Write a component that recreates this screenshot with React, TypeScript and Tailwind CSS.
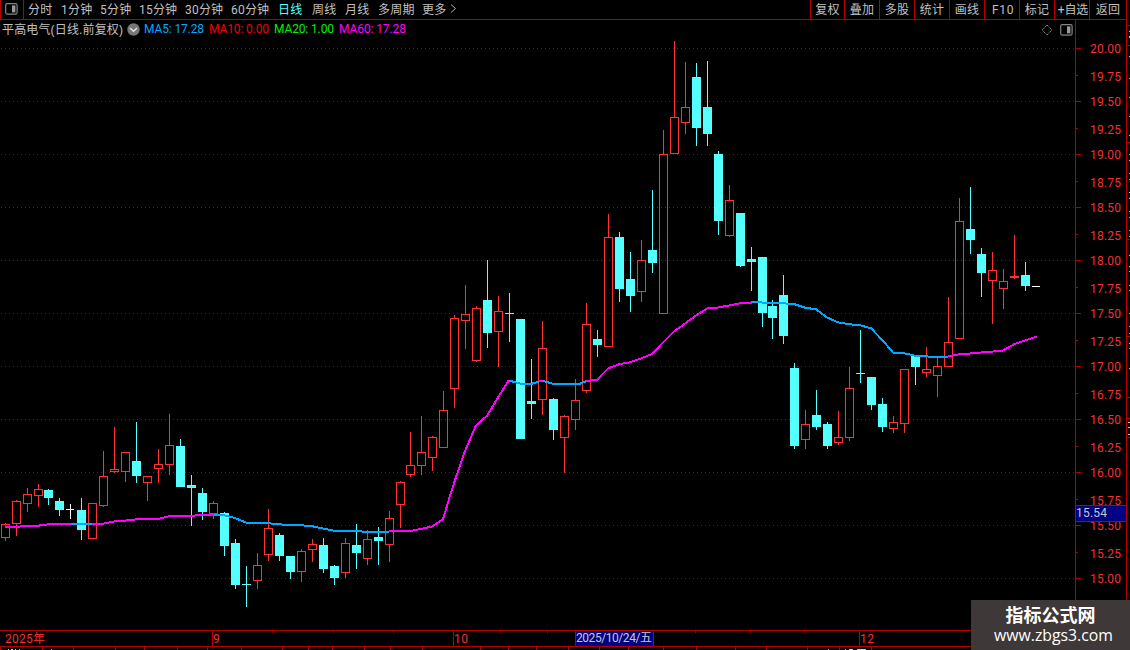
type Kind = 'r' | 'c' | 'w';
type Candle = [number, number, number, number, number, Kind];

// x centre, high, body top, body bottom, low, kind
const candles: Candle[] = [
  [5, 523, 524, 538, 541, 'r'], [16, 500, 501, 524, 536, 'r'], [27, 488, 494, 504, 512, 'r'], [38, 484, 489, 496, 507, 'r'],
  [48, 489, 490, 498, 505, 'c'], [59, 498, 501, 510, 516, 'c'], [70, 504, 509, 510, 519, 'w'], [81, 498, 510, 530, 540, 'c'],
  [92, 503, 503, 539, 539, 'r'], [103, 451, 476, 506, 507, 'r'], [114, 427, 469, 472, 473, 'r'], [125, 452, 452, 472, 482, 'r'],
  [136, 422, 461, 476, 483, 'c'], [147, 476, 476, 483, 501, 'r'], [158, 449, 464, 469, 483, 'r'], [169, 414, 445, 465, 475, 'r'],
  [180, 439, 446, 487, 487, 'c'], [191, 475, 485, 488, 526, 'c'], [202, 488, 493, 512, 520, 'c'], [213, 501, 503, 514, 519, 'r'],
  [224, 512, 513, 546, 556, 'c'], [235, 539, 543, 585, 589, 'c'], [246, 566, 584, 585, 607, 'c'], [257, 553, 565, 581, 589, 'r'],
  [268, 509, 528, 555, 561, 'r'], [279, 533, 535, 556, 561, 'c'], [290, 556, 556, 572, 579, 'c'], [301, 549, 551, 572, 582, 'r'],
  [312, 539, 544, 550, 562, 'r'], [323, 538, 545, 569, 573, 'c'], [334, 565, 566, 578, 585, 'c'], [345, 538, 543, 573, 578, 'r'],
  [356, 524, 545, 553, 569, 'c'], [367, 530, 539, 559, 565, 'r'], [378, 527, 537, 541, 565, 'c'], [389, 511, 518, 545, 562, 'r'],
  [400, 481, 482, 505, 528, 'r'], [410, 432, 465, 475, 477, 'r'], [421, 416, 452, 466, 475, 'r'], [432, 436, 437, 458, 471, 'r'],
  [443, 391, 410, 448, 448, 'r'], [454, 315, 318, 389, 408, 'r'], [465, 285, 314, 321, 349, 'r'], [476, 306, 308, 361, 362, 'r'],
  [487, 260, 300, 333, 348, 'c'], [498, 296, 311, 332, 367, 'r'], [509, 293, 313, 314, 342, 'c'], [520, 319, 319, 439, 439, 'c'],
  [531, 359, 401, 404, 419, 'c'], [542, 321, 348, 400, 415, 'r'], [553, 398, 399, 430, 440, 'c'], [564, 415, 416, 438, 473, 'r'],
  [575, 379, 400, 420, 430, 'r'], [586, 303, 324, 391, 393, 'r'], [597, 330, 339, 345, 357, 'c'], [608, 214, 237, 347, 347, 'r'],
  [619, 232, 237, 289, 302, 'c'], [630, 252, 279, 296, 312, 'c'], [641, 240, 260, 292, 302, 'r'], [652, 190, 250, 263, 273, 'c'],
  [663, 130, 154, 314, 314, 'r'], [674, 41, 117, 154, 154, 'r'], [685, 62, 107, 123, 134, 'r'], [696, 63, 77, 128, 146, 'c'],
  [707, 61, 107, 134, 146, 'c'], [718, 151, 154, 221, 235, 'c'], [729, 185, 200, 236, 237, 'r'], [740, 213, 213, 266, 267, 'c'],
  [751, 247, 259, 262, 291, 'c'], [762, 257, 257, 313, 327, 'c'], [772, 300, 306, 318, 339, 'c'], [783, 275, 295, 336, 344, 'c'],
  [794, 363, 368, 446, 449, 'c'], [805, 410, 424, 440, 449, 'r'], [816, 390, 415, 427, 430, 'c'], [827, 422, 424, 446, 449, 'c'],
  [838, 411, 437, 443, 445, 'r'], [849, 367, 388, 438, 441, 'r'], [860, 330, 373, 374, 383, 'c'], [871, 377, 377, 405, 410, 'c'],
  [882, 398, 404, 427, 432, 'c'], [893, 416, 422, 429, 433, 'r'], [904, 369, 369, 424, 433, 'r'], [915, 355, 355, 367, 385, 'c'],
  [926, 347, 369, 373, 377, 'r'], [937, 358, 366, 376, 397, 'r'], [948, 297, 342, 367, 367, 'r'], [959, 198, 221, 339, 339, 'r'],
  [970, 187, 229, 240, 254, 'c'], [981, 248, 254, 273, 297, 'c'], [992, 252, 270, 281, 324, 'r'], [1003, 269, 281, 289, 309, 'r'],
  [1014, 235, 276, 278, 279, 'r'], [1025, 262, 275, 286, 291, 'c'], [1036, 286, 286, 287, 287, 'w'],
];

const BLUE = '#00a8ff';
const PINK = '#ff00ff';

const trend: { color: string; points: string }[] = [
  { color: PINK, points: '5,527 16,526.7 38,525.7 48,524.4 71,524' },
  { color: BLUE, points: '71,524 92,524' },
  { color: PINK, points: '92,524 103,523.7 114,521.5 125,520.6 136,519.4 158,519 169,516.3 191,515.8 202,515 214,515' },
  { color: BLUE, points: '214,515 224,515.2 235,518 246,522.5 268,523.2 279,524.4 301,525.2 312,526.2 323,528.5 334,530.7 356,531.3 378,532 389,532' },
  { color: PINK, points: '389,531 411,530.8 421,529 432,526.5 443,519.2 450,495.7 455,480 465,451 476,425.5 487,415.7 498,397.5 509,380' },
  { color: BLUE, points: '509,380.5 520,383.6 531,384 541,381' },
  { color: PINK, points: '539,380.5 543,380.5' },
  { color: BLUE, points: '543,381 553,383.7 575,384 580,383.7 587,381' },
  { color: PINK, points: '586,381 597,379.7 608,368.5 619,364.3 630,362.3 641,358.4 652,354 663,342.5 674,331.5 685,323.5 696,315.5 707,308.5 718,307.5 729,305.5 740,303.3 752,302.5' },
  { color: BLUE, points: '751,302 762,302.5 783,303.3 794,304 805,307.7 816,309.3 827,317.5 838,322.3 849,324.3 860,325.2 871,328.3 882,339.7 893,352.5 904,353.2 915,355.7 926,356.4 937,357 948,357' },
  { color: PINK, points: '948,356.3 959,354.3 970,353.5 981,352.5 992,351.6 1003,350.5 1014,344.3 1025,340.5 1037,336.5' },
];

const majorRows = [48, 101, 154, 207, 260, 313, 366, 419, 472, 525, 578];
const minorRows = majorRows.slice(0, -1);
const price = (i: number) => (20 - i * 0.25).toFixed(2);

const periods = [
  { label: '分时', w: 'w-[33px]' },
  { label: '1分钟', w: 'w-[39px]' },
  { label: '5分钟', w: 'w-[39px]' },
  { label: '15分钟', w: 'w-[46px]' },
  { label: '30分钟', w: 'w-[46px]' },
  { label: '60分钟', w: 'w-[47px]' },
  { label: '日线', w: 'w-[34px]', active: true },
  { label: '周线', w: 'w-[33px]' },
  { label: '月线', w: 'w-[33px]' },
  { label: '多周期', w: 'w-[44px]' },
  { label: '更多', w: 'w-[27px]' },
];

const actions = [
  { label: '复权', w: 'w-[34px]' },
  { label: '叠加', w: 'w-[35px]' },
  { label: '多股', w: 'w-[35px]' },
  { label: '统计', w: 'w-[35px]' },
  { label: '画线', w: 'w-[35px]' },
  { label: 'F10', w: 'w-[35px] pl-[2px] tracking-[0.7px]' },
  { label: '标记', w: 'w-[35px]' },
  { label: '+自选', w: 'w-[35px] pl-[2px] tracking-[-0.1px]' },
  { label: '返回', w: 'w-[37px]' },
];

const averages = [
  { label: 'MA5: 17.28', cls: 'fill-[#00a8ff]', w: 60, gap: 5 },
  { label: 'MA10: 0.00', cls: 'fill-[#f00000]', w: 60, gap: 5 },
  { label: 'MA20: 1.00', cls: 'fill-[#00f000]', w: 60, gap: 5 },
  { label: 'MA60: 17.28', cls: 'fill-[#ff00ff]', w: 67, gap: 0 },
];

function PanelIcon() {
  return (
    <svg width="13" height="12" viewBox="0 0 13 12" className="shrink-0">
      <rect x="0.7" y="0.7" width="11.4" height="10.4" rx="1.5" fill="none" stroke="#858585" strokeWidth="1.2" />
      <rect x="7" y="2.4" width="3.4" height="7" fill="#9a9a9a" />
    </svg>
  );
}

function Toolbar() {
  return (
    <div className="flex h-5 w-[1127px] shrink-0 border-b border-[#b40000] font-['Roboto','Noto_Sans_CJK_SC',sans-serif] text-xs leading-[21px] tracking-[0.2px] whitespace-nowrap text-[#c0c0c0]">
      <div className="flex w-6 border-x border-[#b40000] pt-[3px] pl-1">
        <PanelIcon />
      </div>
      <div className="flex flex-1 pl-1">
        {periods.map((p) => (
          <span key={p.label} className={`${p.w} ${p.active ? 'text-[#54ffff]' : ''}`}>{p.label}</span>
        ))}
        <svg width="8" height="11" viewBox="0 0 8 11" className="mt-[3px]">
          <path d="M2 1.5L6.5 5.5L2 9.5" fill="none" stroke="#b0b0b0" />
        </svg>
      </div>
      <div className="flex h-[19px] border-r border-[#b40000]">
        {actions.map((a) => (
          <span key={a.label} className={`${a.w} h-[19px] border-l border-[#b40000] text-center`}>{a.label}</span>
        ))}
      </div>
    </div>
  );
}

function TitleRow() {
  return (
    <div className="flex h-5 items-center whitespace-nowrap pl-[2px] text-xs text-[#c0c0c0]">
      <span className="w-[125px] leading-[18px] tracking-[0.15px]">平高电气(日线.前复权)</span>
      <svg width="13" height="13" viewBox="0 0 13 13" className="mt-[-2px] mr-1">
        <circle cx="6.5" cy="6.5" r="6.2" fill="#777777" />
        <path d="M3 5L6.5 8.3L10 5" fill="none" stroke="#e8e8e8" strokeWidth="1.3" />
      </svg>
      {averages.map((a) => (
        <svg key={a.label} width={a.w + a.gap} height="20" className="shrink-0 font-['Roboto',sans-serif]">
          <text x="0" y="13" textLength={a.w} className={a.cls}>{a.label}</text>
        </svg>
      ))}
      <div className="ml-auto flex items-center gap-[7px] pr-[2px]">
        <svg width="12" height="12" viewBox="0 0 12 12">
          <path d="M6 1L11 6L6 11L1 6Z" fill="none" stroke="#8c8c8c" strokeDasharray="1.4 0.7" />
        </svg>
        <PanelIcon />
      </div>
    </div>
  );
}

function CandleShape({ c }: { c: Candle }) {
  const [x, high, top, bottom, low, kind] = c;
  const color = kind === 'r' ? '#ff3232' : kind === 'c' ? '#54ffff' : '#ffffff';
  return (
    <g fill={color}>
      {top > high && <rect x={x} y={high} width="1" height={top - high} />}
      {low > bottom && <rect x={x} y={bottom} width="1" height={low - bottom} />}
      {kind === 'r' && bottom - top > 2 ? (
        <rect x={x - 3.5} y={top + 0.5} width="8" height={bottom - top - 1} fill="none" stroke={color} />
      ) : (
        <rect x={x - 4} y={top} width={kind === 'w' ? 8 : 9} height={bottom - top} />
      )}
    </g>
  );
}

function Chart() {
  return (
    <svg width="1075" height="590" viewBox="0 40 1075 590" shapeRendering="crispEdges" className="block">
      {majorRows.map((y) => (
        <line key={y} x1="1" x2="1075" y1={y + 0.5} y2={y + 0.5} stroke="#a00000" strokeDasharray="1 3" />
      ))}
      {candles.map((c) => (
        <CandleShape key={c[0]} c={c} />
      ))}
      {trend.map((t) => (
        <polyline key={t.points} points={t.points} fill="none" stroke={t.color} strokeWidth="2" />
      ))}
    </svg>
  );
}

function PriceAxis() {
  return (
    <svg width="52" height="610" viewBox="1075 20 52 610" shapeRendering="crispEdges" className="block shrink-0 font-['Roboto',sans-serif]">
      <g fill="#b40000">
        <rect x="1075" y="20" width="1" height="610" />
        <rect x="1126" y="20" width="1" height="610" />
        {majorRows.map((y) => (
          <rect key={y} x="1076" y={y} width="5" height="1" />
        ))}
        {minorRows.map((y) => (
          <rect key={y} x="1076" y={y + 27} width="2" height="1" />
        ))}
      </g>
      <g fill="#f43030">
        {majorRows.map((y, i) => (
          <text key={y} x="1090" y={y + 5} textLength="31">{price(i * 2)}</text>
        ))}
        {minorRows.map((y, i) => (
          <text key={y} x="1090" y={y + 33} textLength="31">{price(i * 2 + 1)}</text>
        ))}
      </g>
      <rect x="1076" y="505" width="50" height="17" fill="#b40000" />
      <rect x="1076" y="506" width="50" height="15" fill="#000084" />
      <text x="1076" y="517" textLength="31" fill="#c8c8c8">15.54</text>
    </svg>
  );
}

const edgeMarks = [25, 45, 142, 239, 336, 397, 418, 437];
const edgeDots = [31, 36, 37, 56, 78, 97, 116, 135, 154, 160, 173, 179, 192, 198, 211, 217, 230, 236, 255, 266, 271, 285, 290, 313, 326, 333, 343, 348, 368, 422, 427, 434];

function EdgeStrip() {
  return (
    <svg width="3" height="610" viewBox="1127 20 3 610" shapeRendering="crispEdges" className="block shrink-0">
      {edgeMarks.map((y) => (
        <rect key={y} x="1127" y={y} width="3" height="1" fill="#b40000" />
      ))}
      {edgeDots.map((y) => (
        <rect key={y} x={y > 400 ? 1128 : 1129} y={y} width="2" height="1" fill="#c4c4c4" />
      ))}
    </svg>
  );
}

const weekTicks = [272, 333, 393, 500, 547, 695, 750, 804];
const monthTicks = [212, 453, 859];
const lowerTicks = [0, 42, 73, 115, 144, 177, 207, 241, 282, 308, 332, 364, 390, 422, 480, 508, 536, 568, 599, 628, 663, 696, 735, 766, 807, 839, 871];

function TimeAxis() {
  return (
    <svg width="1130" height="20" viewBox="0 630 1130 20" shapeRendering="crispEdges" className="block shrink-0 font-['Roboto','Noto_Sans_CJK_SC',sans-serif]">
      <g fill="#b40000">
        <rect x="0" y="630" width="1130" height="1" />
        <rect x="0" y="646" width="1130" height="1" />
        {monthTicks.map((x) => (
          <rect key={x} x={x} y="631" width="1" height="15" />
        ))}
        {weekTicks.map((x) => (
          <rect key={x} x={x} y="631" width="1" height="2" />
        ))}
        {lowerTicks.map((x) => (
          <rect key={x} x={x} y="647" width="1" height="3" />
        ))}
        <rect x="575" y="631" width="79" height="15" />
      </g>
      <rect x="576" y="631" width="77" height="15" fill="#000084" />
      <g fill="#f43030">
        <text x="5" y="643" textLength="40">2025年</text>
        <text x="213" y="643">9</text>
        <text x="454" y="643" textLength="14">10</text>
        <text x="860" y="643" textLength="14">12</text>
      </g>
      <text x="576" y="642" textLength="76" fill="#c8c8c8">2025/10/24/五</text>
      <g fill="#c4c4c4">
        <rect x="8" y="649" width="1" height="1" />
        <rect x="11" y="649" width="2" height="1" />
        <rect x="15" y="649" width="1" height="1" />
        <rect x="19" y="649" width="1" height="1" />
        <rect x="51" y="649" width="1" height="1" />
        <rect x="828" y="649" width="1" height="1" />
        <rect x="845" y="649" width="1" height="1" />
      </g>
      <g fill="#54ffff">
        <rect x="849" y="649" width="4" height="1" />
        <rect x="857" y="649" width="9" height="1" />
      </g>
    </svg>
  );
}

export default function App() {
  return (
    <div className="relative flex h-[650px] w-[1130px] flex-col overflow-hidden bg-black font-['Liberation_Sans','Noto_Sans_CJK_SC',sans-serif] text-xs">
      <Toolbar />
      <div className="flex h-[610px] shrink-0">
        <div className="flex w-[1075px] shrink-0 flex-col">
          <TitleRow />
          <Chart />
        </div>
        <PriceAxis />
        <EdgeStrip />
      </div>
      <TimeAxis />
      <div className="absolute right-0 bottom-0 flex h-[50px] w-[159px] flex-col items-center bg-[#3e3838] text-white">
        <span className="mt-[5px] text-[18px] leading-[22px] font-bold">指标公式网</span>
        <span className="mt-[-1px] ml-[6px] font-['Open_Sans',sans-serif] text-[15.8px] leading-[19px]">www.zbgs3.com</span>
      </div>
    </div>
  );
}
